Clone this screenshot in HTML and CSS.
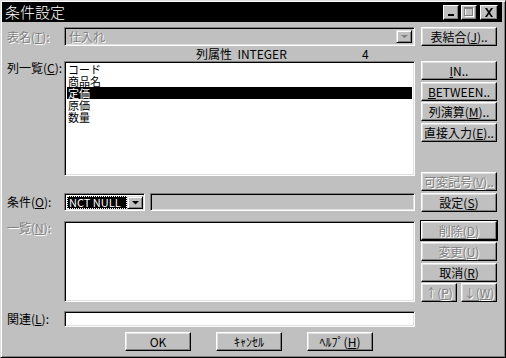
FILE: index.html
```html
<!DOCTYPE html>
<html lang="ja">
<head>
    <meta charset="UTF-8">
    <title>条件設定</title>
    <link rel="stylesheet" href="styles.css">
</head>
<body>
    <div class="window">
        <div class="titlebar">
            <span class="title">条件設定</span>
            <div class="caption-buttons">
                <span class="cap-btn">
                    <svg width="8" height="8" viewBox="0 0 8 8"><rect x="1" y="6" width="6" height="2" fill="#000"/></svg>
                </span>
                <span class="cap-btn">
                    <svg width="10" height="10" viewBox="0 0 10 10"><rect x="1.5" y="1.5" width="8" height="8" fill="none" stroke="#fff"/><rect x="0.5" y="0.5" width="8" height="8" fill="none" stroke="#808080"/><rect x="1" y="1" width="7" height="1" fill="#808080"/></svg>
                </span>
                <span class="cap-btn close">
                    <svg width="10" height="9" viewBox="0 0 10 9"><path d="M1 0h2l2 3 2-3h2L6 4.5 9 9H7L5 6 3 9H1l3-4.5z" fill="#000"/></svg>
                </span>
            </div>
        </div>

        <div class="content">
            <div class="columns">
                <div class="left">
                    <div class="row row-table">
                        <label class="label disabled">表名(<u>T</u>):</label>
                        <div class="combo combo-table">
                            <span class="combo-text disabled">仕入れ</span>
                            <span class="drop-btn">
                                <svg width="7" height="4" viewBox="0 0 7 4"><path d="M1 1h5L3.5 3.5z" fill="#fff"/><path d="M0 0h7L3.5 3.5z" fill="#808080"/></svg>
                            </span>
                        </div>
                    </div>

                    <div class="row attr-row">
                        <span class="attr-name">列属性&nbsp; INTEGER</span>
                        <span class="attr-size">4</span>
                    </div>

                    <div class="row row-columns">
                        <label class="label">列一覧(<u>C</u>):</label>
                        <ul class="listbox columns-list">
                            <li>コード</li>
                            <li>商品名</li>
                            <li class="selected">定価</li>
                            <li>原価</li>
                            <li>数量</li>
                        </ul>
                    </div>

                    <div class="row row-cond">
                        <label class="label">条件(<u>O</u>):</label>
                        <div class="combo combo-cond">
                            <span class="combo-text">NCT NULL</span>
                            <span class="drop-btn">
                                <svg width="7" height="4" viewBox="0 0 7 4"><path d="M0 0h7L3.5 3.5z" fill="#000"/></svg>
                            </span>
                        </div>
                        <div class="field field-disabled"></div>
                    </div>

                    <div class="row row-list">
                        <label class="label disabled">一覧(<u>N</u>):</label>
                        <ul class="listbox cond-list"></ul>
                    </div>

                    <div class="row row-rel">
                        <label class="label">関連(<u>L</u>):</label>
                        <div class="field field-rel"></div>
                    </div>
                </div>

                <div class="right">
                    <button class="btn b-join">表結合(<u>J</u>)..</button>
                    <button class="btn b-in"><u>I</u>N..</button>
                    <button class="btn b-between"><u>B</u>ETWEEN..</button>
                    <button class="btn b-calc">列演算(<u>M</u>)..</button>
                    <button class="btn b-direct">直接入力(<u>E</u>)..</button>
                    <button class="btn b-var disabled">可変記号(<u>V</u>)..</button>
                    <button class="btn b-set">設定(<u>S</u>)</button>
                    <button class="btn b-del default disabled">削除(<u>D</u>)</button>
                    <button class="btn b-edit disabled">変更(<u>U</u>)</button>
                    <button class="btn b-cancel">取消(<u>R</u>)</button>
                    <div class="updown">
                        <button class="btn disabled">↑(<u>P</u>)</button>
                        <button class="btn disabled">↓(<u>W</u>)</button>
                    </div>
                </div>
            </div>

            <div class="footer">
                <button class="btn">OK</button>
                <button class="btn">ｷｬﾝｾﾙ</button>
                <button class="btn">ﾍﾙﾌﾟ(<u>H</u>)</button>
            </div>
        </div>
    </div>
</body>
</html>
```

FILE: styles.css
```css
body {
    margin: 0;
    font-family: "Noto Sans CJK JP", "Liberation Sans", sans-serif;
    font-size: 12px;
    color: #000;
}
.window {
    width: 506px;
    height: 358px;
    box-sizing: border-box;
    background: #c0c0c0;
    border: 1px solid;
    border-color: #dfdfdf #000 #000 #dfdfdf;
    box-shadow: inset 1px 1px #fff, inset -1px -1px #808080;
    padding: 1px 3px 1px 1px;
}
.titlebar {
    height: 20px;
    background: #000;
    display: flex;
    align-items: center;
    justify-content: space-between;
    padding: 0 4px 0 3px;
}
.title {
    color: #fff;
    font-size: 15px;
    font-weight: 300;
    line-height: 20px;
}
.caption-buttons {
    display: flex;
    gap: 2px;
}
.cap-btn {
    width: 16px;
    height: 15px;
    box-sizing: border-box;
    background: #c0c0c0;
    border: 1px solid;
    border-color: #fff #000 #000 #fff;
    box-shadow: inset -1px -1px #808080;
    display: flex;
    align-items: center;
    justify-content: center;
}
.cap-btn.close {
    margin-left: 1px;
    width: 18px;
}
.content {
    padding: 5px 0 0 5px;
}
.columns {
    display: flex;
}
.left {
    width: 408px;
    display: flex;
    flex-direction: column;
}
.right {
    width: 76px;
    margin-left: 6px;
    display: flex;
    flex-direction: column;
}
.row {
    display: flex;
}
.label {
    width: 57px;
    flex: none;
    line-height: 14px;
    white-space: nowrap;
}
.disabled {
    color: #808080;
    text-shadow: 1px 1px 0 #fff;
}
.row-table {
    height: 19px;
    align-items: center;
}
.combo {
    box-sizing: border-box;
    height: 100%;
    border: 1px solid;
    border-color: #808080 #fff #fff #808080;
    box-shadow: inset 1px 1px #000, inset -1px -1px #dfdfdf;
    padding: 2px;
    display: flex;
    align-items: stretch;
}
.combo-table {
    width: 351px;
    background: #c0c0c0;
}
.combo-text {
    flex: 1;
    line-height: 14px;
    padding-left: 2px;
    white-space: nowrap;
}
.drop-btn {
    width: 16px;
    flex: none;
    box-sizing: border-box;
    background: #c0c0c0;
    border: 1px solid;
    border-color: #dfdfdf #000 #000 #dfdfdf;
    box-shadow: inset 1px 1px #fff, inset -1px -1px #808080;
    display: flex;
    align-items: center;
    justify-content: center;
}
.attr-row {
    height: 15px;
    align-items: center;
    padding-left: 189px;
    line-height: 14px;
}
.attr-name {
    width: 166px;
}
.row-columns {
    height: 115px;
}
.listbox {
    margin: 0;
    list-style: none;
    width: 351px;
    box-sizing: border-box;
    background: #fff;
    border: 1px solid;
    border-color: #808080 #fff #fff #808080;
    box-shadow: inset 1px 1px #000, inset -1px -1px #dfdfdf;
    padding: 1px 2px 0 2px;
}
.listbox li {
    font-size: 11px;
    line-height: 12px;
    height: 12px;
    padding-left: 1px;
}
.listbox li.selected {
    background: #000;
    color: #fff;
}
.row-cond {
    height: 18px;
    margin-top: 17px;
    align-items: center;
}
.combo-cond {
    width: 81px;
    background: #fff;
    padding: 2px 1px 1px 2px;
}
.combo-cond .combo-text {
    background: #000;
    color: #fff;
    font-size: 11px;
    line-height: 13px;
    padding-left: 2px;
    outline: 1px dotted #fff;
    outline-offset: -1px;
}
.field {
    box-sizing: border-box;
    height: 100%;
    border: 1px solid;
    border-color: #808080 #fff #fff #808080;
    box-shadow: inset 1px 1px #000, inset -1px -1px #dfdfdf;
}
.field-disabled {
    width: 265px;
    margin-left: 5px;
    background: #c0c0c0;
}
.row-list {
    height: 81px;
    margin-top: 10px;
}
.cond-list {
    height: 100%;
}
.row-rel {
    height: 16px;
    margin-top: 9px;
    align-items: center;
}
.field-rel {
    width: 351px;
    background: #fff;
}
.btn {
    height: 19px;
    box-sizing: border-box;
    background: #c0c0c0;
    border: 1px solid;
    border-color: #fff #000 #000 #fff;
    box-shadow: inset -1px -1px #808080, inset 1px 1px #dfdfdf;
    font-family: inherit;
    font-size: 12px;
    line-height: 14px;
    padding: 0;
    color: #000;
    white-space: nowrap;
}
.btn.disabled {
    color: #808080;
    text-shadow: 1px 1px 0 #fff;
}
.btn.default {
    outline: 1px solid #000;
    outline-offset: 0;
}
.b-in { margin-top: 15px; }
.b-between { margin-top: 2px; }
.b-calc { margin-top: 1px; }
.b-direct { margin-top: 2px; }
.b-var { margin-top: 30px; }
.b-set { margin-top: 2px; }
.b-del { margin-top: 9px; }
.b-edit { margin-top: 2px; }
.b-cancel { margin-top: 2px; }
.updown {
    margin-top: 1px;
    display: flex;
    justify-content: space-between;
}
.updown .btn {
    width: 36px;
}
.footer {
    margin: 5px 0 0 118px;
    display: flex;
    gap: 25px;
}
.footer .btn {
    width: 66px;
}
```
